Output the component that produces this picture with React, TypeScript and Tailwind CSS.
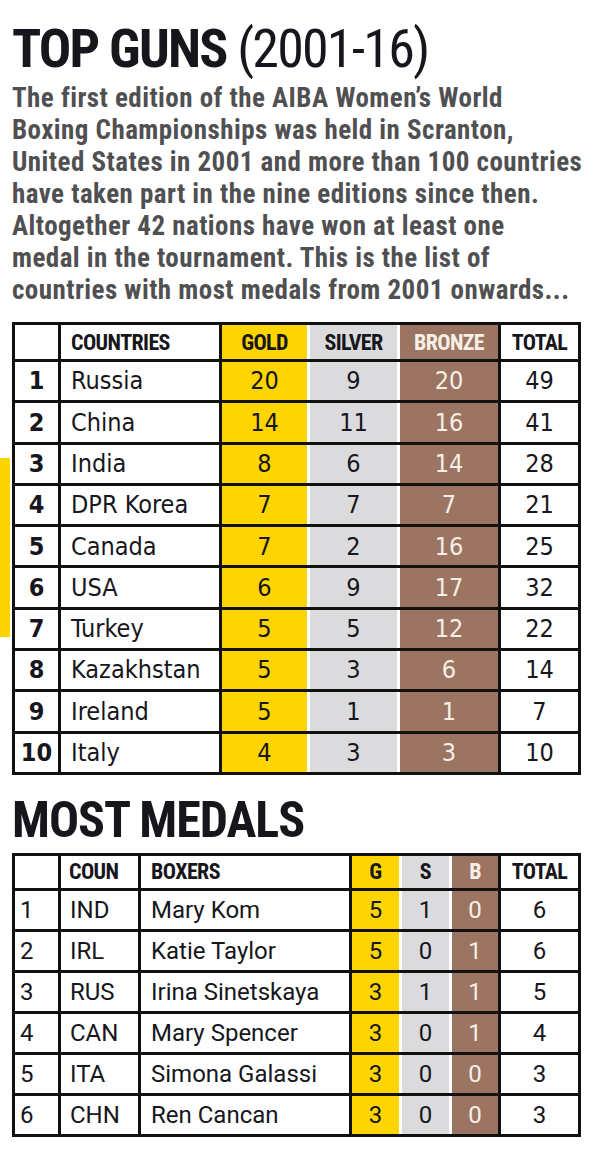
const HEAD = "'Roboto Condensed', 'Roboto', sans-serif"
const BODY = "'DejaVu Sans Condensed', 'DejaVu Sans', sans-serif"
const BODY2 = "Roboto, 'DejaVu Sans', sans-serif"

const countries: [number, string, number, number, number, number][] = [
  [1, "Russia", 20, 9, 20, 49],
  [2, "China", 14, 11, 16, 41],
  [3, "India", 8, 6, 14, 28],
  [4, "DPR Korea", 7, 7, 7, 21],
  [5, "Canada", 7, 2, 16, 25],
  [6, "USA", 6, 9, 17, 32],
  [7, "Turkey", 5, 5, 12, 22],
  [8, "Kazakhstan", 5, 3, 6, 14],
  [9, "Ireland", 5, 1, 1, 7],
  [10, "Italy", 4, 3, 3, 10],
]

const boxers: [number, string, string, number, number, number, number][] = [
  [1, "IND", "Mary Kom", 5, 1, 0, 6],
  [2, "IRL", "Katie Taylor", 5, 0, 1, 6],
  [3, "RUS", "Irina Sinetskaya", 3, 1, 1, 5],
  [4, "CAN", "Mary Spencer", 3, 0, 1, 4],
  [5, "ITA", "Simona Galassi", 3, 0, 0, 3],
  [6, "CHN", "Ren Cancan", 3, 0, 0, 3],
]

const intro = [
  "The first edition of the AIBA Women\u2019s World",
  "Boxing Championships was held in Scranton,",
  "United States in 2001 and more than 100 countries",
  "have taken part in the nine editions since then.",
  "Altogether 42 nations have won at least one",
  "medal in the tournament. This is the list of",
  "countries with most medals from 2001 onwards...",
]

function Label({ children, light }: { children: React.ReactNode; light?: boolean }) {
  return (
    <span
      className={`text-[22px] font-bold tracking-[-0.6px] ${light ? "text-[#f7efe6]" : "text-[#16161c]"}`}
      style={{ fontFamily: HEAD }}
    >
      {children}
    </span>
  )
}

export default function App() {
  return (
    <div className="w-[600px] bg-white pl-[12px] text-[#16161c]">
      <h1 className="pt-[22px] text-[54px] leading-[54px] tracking-[-1.8px] whitespace-nowrap" style={{ fontFamily: HEAD }}>
        <span className="font-bold">TOP GUNS</span> <span className="font-normal">(2001-16)</span>
      </h1>

      <div
        className="mt-[6px] text-[27px] leading-[32px] font-bold tracking-[0.45px] text-[#505053]"
        style={{ fontFamily: HEAD }}
      >
        {intro.map((line) => (
          <div key={line} className="whitespace-nowrap">
            {line}
          </div>
        ))}
      </div>

      <div className="mt-[16px] -ml-[12px] flex">
        <div className="w-[12px]">
          <div className="mt-[136px] h-[179px] w-[10px] bg-[#fdd400]" />
        </div>

        <div className="w-[569px] border-[3px] border-[#111]">
          <div className="flex h-[37px] border-b-[3px] border-[#111]">
            <div className="w-[46px] border-r-[3px] border-[#111]" />
            <div className="flex w-[161px] items-center border-r-[3px] border-[#111] pl-[10px]">
              <Label>COUNTRIES</Label>
            </div>
            <div className="flex w-[88px] items-center justify-center border-r-[3px] border-white bg-[#fed500]">
              <Label>GOLD</Label>
            </div>
            <div className="flex w-[90px] items-center justify-center border-r-[3px] border-white bg-[#dbdbdd]">
              <Label>SILVER</Label>
            </div>
            <div className="flex w-[101px] items-center justify-center border-r-[3px] border-[#111] bg-[#9b7562]">
              <Label light>BRONZE</Label>
            </div>
            <div className="flex w-[77px] items-center justify-center">
              <Label>TOTAL</Label>
            </div>
          </div>

          {countries.map(([rank, name, g, s, b, t], i) => (
            <div
              key={name}
              className={`flex text-[25px] ${i < countries.length - 1 ? "h-[41.3px] border-b-[3px] border-[#111]" : "h-[38.3px]"}`}
              style={{ fontFamily: BODY }}
            >
              <div className="flex w-[46px] items-center justify-center border-r-[3px] border-[#111] font-bold">{rank}</div>
              <div className="flex w-[161px] items-center border-r-[3px] border-[#111] pl-[10px]">{name}</div>
              <div className="flex w-[88px] items-center justify-center border-r-[3px] border-white bg-[#fed500]">{g}</div>
              <div className="flex w-[90px] items-center justify-center border-r-[3px] border-white bg-[#dbdbdd]">{s}</div>
              <div className="flex w-[101px] items-center justify-center border-r-[3px] border-[#111] bg-[#9b7562] text-[#f7efe6]">
                {b}
              </div>
              <div className="flex w-[77px] items-center justify-center">{t}</div>
            </div>
          ))}
        </div>
      </div>

      <h2 className="mt-[20px] text-[50px] leading-[50px] font-bold tracking-[-1px]" style={{ fontFamily: HEAD }}>
        MOST MEDALS
      </h2>

      <div className="mt-[8px] w-[569px] border-[3px] border-[#111]">
        <div className="flex h-[35px] border-b-[3px] border-[#111]">
          <div className="w-[46px] border-r-[3px] border-[#111]" />
          <div className="flex w-[80px] items-center border-r-[3px] border-[#111] pl-[8px]">
            <Label>COUN</Label>
          </div>
          <div className="flex w-[211px] items-center border-r-[3px] border-[#111] pl-[10px]">
            <Label>BOXERS</Label>
          </div>
          <div className="flex w-[50px] items-center justify-center border-r-[3px] border-white bg-[#fed500]">
            <Label>G</Label>
          </div>
          <div className="flex w-[50px] items-center justify-center border-r-[3px] border-white bg-[#dbdbdd]">
            <Label>S</Label>
          </div>
          <div className="flex w-[49px] items-center justify-center border-r-[3px] border-[#111] bg-[#9b7562]">
            <Label light>B</Label>
          </div>
          <div className="flex w-[77px] items-center justify-center">
            <Label>TOTAL</Label>
          </div>
        </div>

        {boxers.map(([rank, code, name, g, s, b, t], i) => (
          <div
            key={name}
            className={`flex text-[24px] ${i < boxers.length - 1 ? "h-[41px] border-b-[3px] border-[#111]" : "h-[38px]"}`}
            style={{ fontFamily: BODY2 }}
          >
            <div className="flex w-[46px] items-center border-r-[3px] border-[#111] pl-[5px]">{rank}</div>
            <div className="flex w-[80px] items-center border-r-[3px] border-[#111] pl-[9px]">{code}</div>
            <div className="flex w-[211px] items-center border-r-[3px] border-[#111] pl-[10px] whitespace-nowrap">{name}</div>
            <div className="flex w-[50px] items-center justify-center border-r-[3px] border-white bg-[#fed500]">{g}</div>
            <div className="flex w-[50px] items-center justify-center border-r-[3px] border-white bg-[#dbdbdd]">{s}</div>
            <div className="flex w-[49px] items-center justify-center border-r-[3px] border-[#111] bg-[#9b7562] text-[#f7efe6]">
              {b}
            </div>
            <div className="flex w-[77px] items-center justify-center">{t}</div>
          </div>
        ))}
      </div>
    </div>
  )
}
